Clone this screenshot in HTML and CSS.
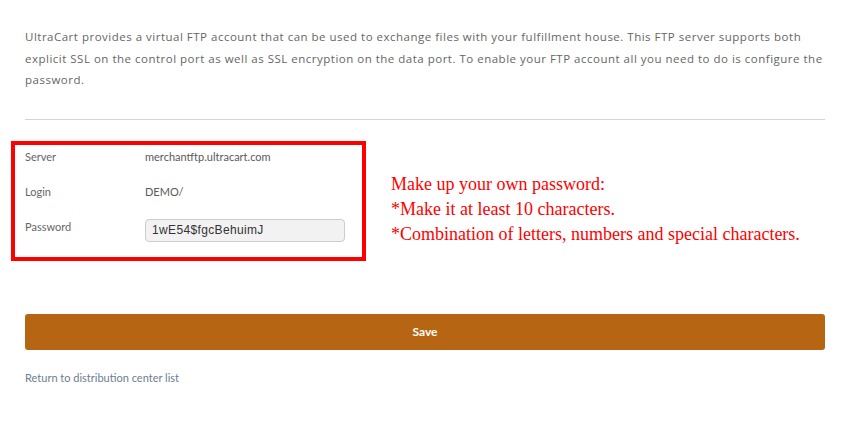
FILE: index.html
```html
<!DOCTYPE html>
<html lang="en">
<head>
  <meta charset="UTF-8">
  <meta name="viewport" content="width=device-width, initial-scale=1.0">
  <title>FTP Account</title>
  <link rel="stylesheet" href="styles.css">
</head>
<body>
  <main class="page">
    <p class="intro">UltraCart provides a virtual FTP account that can be used to exchange files with your fulfillment house. This FTP server supports both explicit SSL on the control port as well as SSL encryption on the data port. To enable your FTP account all you need to do is configure the password.</p>

    <hr class="divider">

    <section class="ftp-row">
      <div class="ftp-box">
        <div class="field">
          <span class="field-label">Server</span>
          <span class="field-value">merchantftp.ultracart.com</span>
        </div>
        <div class="field">
          <span class="field-label">Login</span>
          <span class="field-value">DEMO/</span>
        </div>
        <div class="field">
          <span class="field-label">Password</span>
          <input class="password-input" type="text" value="1wE54$fgcBehuimJ">
        </div>
      </div>

      <div class="notes">
        <p>Make up your own password:</p>
        <p>*Make it at least 10 characters.</p>
        <p>*Combination of letters, numbers and special characters.</p>
      </div>
    </section>

    <button class="save-button">Save</button>

    <a class="back-link" href="#">Return to distribution center list</a>
  </main>
</body>
</html>
```

FILE: styles.css
```css
body {
  margin: 0;
  background-color: #fff;
  font-family: Lato, "Open Sans", sans-serif;
  color: #555;
}

.page {
  padding: 26px 18px 0 25px;
}

.intro {
  margin: 0;
  font-family: "Open Sans", sans-serif;
  font-size: 11.5px;
  line-height: 21.5px;
  letter-spacing: 0.5px;
  color: #666;
}

.divider {
  border: none;
  border-top: 1px solid #d4d4d4;
  margin: 28px 0 0 0;
}

.ftp-row {
  display: flex;
  align-items: flex-start;
  margin-top: 21px;
  margin-left: -14px;
}

.ftp-box {
  display: flex;
  flex-direction: column;
  gap: 11px;
  width: 337px;
  height: 112px;
  border: 4px solid #f00;
  padding: 0 0 0 10px;
}

.field {
  display: flex;
  align-items: center;
  height: 24px;
  font-size: 11px;
}

.field-label {
  width: 120px;
  color: #666;
}

.field-value {
  color: #5a5a5a;
}

.password-input {
  width: 186px;
  height: 19px;
  padding: 1px 6px;
  border: 1px solid #ccc;
  border-radius: 4px;
  background-color: #f2f2f2;
  font-family: "Liberation Sans", Arial, sans-serif;
  font-size: 12px;
  letter-spacing: 0.35px;
  color: #333;
  margin-top: 7px;
}

.notes {
  margin-left: 25px;
  margin-top: 31px;
  font-family: "Liberation Serif", "Times New Roman", serif;
  font-size: 18px;
  line-height: 25px;
  color: #f00;
}

.notes p {
  margin: 0;
}

.save-button {
  display: block;
  width: 100%;
  height: 36px;
  margin-top: 53px;
  border: none;
  border-radius: 3px;
  background-color: #b66513;
  color: #fff;
  font-family: Lato, sans-serif;
  font-weight: bold;
  font-size: 12px;
  cursor: pointer;
}

.back-link {
  display: inline-block;
  margin-top: 21px;
  font-family: Lato, sans-serif;
  font-size: 11px;
  color: #6d7d91;
  text-decoration: none;
}
```
